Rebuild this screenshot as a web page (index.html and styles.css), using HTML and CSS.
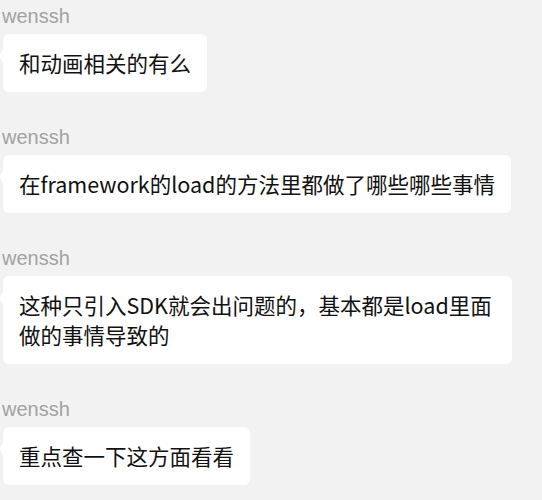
FILE: index.html
```html
<!DOCTYPE html>
<html lang="zh-CN">
<head>
  <meta charset="UTF-8">
  <meta name="viewport" content="width=device-width, initial-scale=1.0">
  <title>聊天记录</title>
  <link rel="stylesheet" href="styles.css">
</head>
<body>
  <!-- Messages -->
  <main class="chat">
    <div class="msg">
      <div class="name">wenssh</div>
      <div class="bubble">和动画相关的有么</div>
    </div>
    <div class="msg">
      <div class="name">wenssh</div>
      <div class="bubble">在framework的load的方法里都做了哪些哪些事情</div>
    </div>
    <div class="msg">
      <div class="name">wenssh</div>
      <div class="bubble">这种只引入SDK就会出问题的，基本都是load里面做的事情导致的</div>
    </div>
    <div class="msg">
      <div class="name">wenssh</div>
      <div class="bubble">重点查一下这方面看看</div>
    </div>
  </main>
</body>
</html>
```

FILE: styles.css
```css
/* Global */
* {
  margin: 0;
  padding: 0;
  box-sizing: border-box;
}
body {
  background: #f2f2f2;
  color: #111;
  font-family: "Liberation Sans", "Noto Sans CJK SC", sans-serif;
}
.chat {
  padding: 5px 0 0 3px;
  display: flex;
  flex-direction: column;
  gap: 34px;
}
/* Message */
.msg {
  display: flex;
  flex-direction: column;
  align-items: flex-start;
}
.name {
  font-size: 20px;
  line-height: 22px;
  color: #a2a2a2;
  margin-left: -1px;
}
.bubble {
  position: relative;
  margin-top: 7px;
  max-width: 509px;
  background: #fff;
  border-radius: 6px;
  padding: 14px 16px;
  font-family: "Noto Sans CJK SC", sans-serif;
  font-size: 21.5px;
  line-height: 30px;
}
.bubble::before {
  content: "";
  position: absolute;
  left: -4px;
  top: 16px;
  border-top: 6px solid transparent;
  border-bottom: 6px solid transparent;
  border-right: 4px solid #fff;
}
```
